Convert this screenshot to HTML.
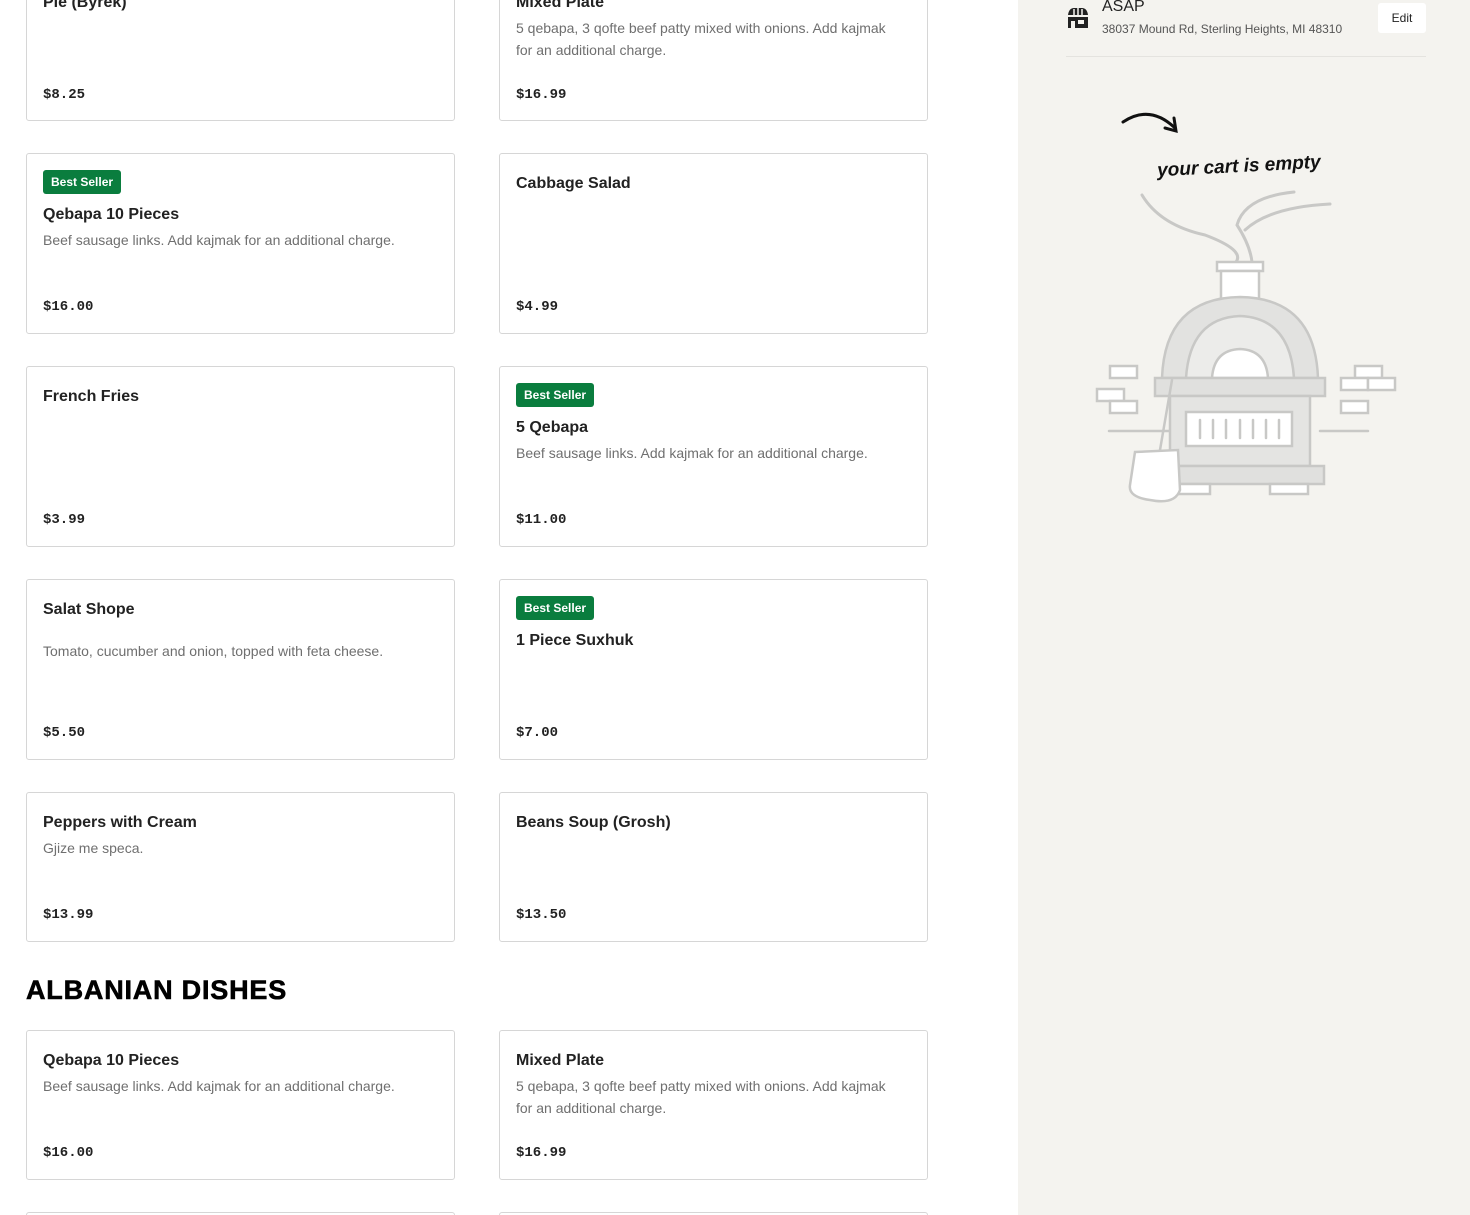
<!DOCTYPE html>
<html><head><meta charset="utf-8"><style>
*{box-sizing:border-box;margin:0;padding:0}
html{width:1470px;height:1215px;overflow:hidden}
body{width:1470px;height:1215px;overflow:hidden;background:#fff;font-family:"Liberation Sans",sans-serif;position:relative}
.card{position:absolute;width:429px;border:1px solid #d6d6d6;border-radius:3px;background:#fff}
.l{left:26px}.r{left:499px}
.t{position:absolute;left:16px;font-size:16px;font-weight:bold;color:#222;white-space:nowrap;margin-top:2px}
.d{position:absolute;left:16px;right:30px;font-size:14px;line-height:22px;color:#6f6f6f}
.p{position:absolute;left:16px;font-family:"Liberation Mono",monospace;font-weight:bold;font-size:14px;color:#222;margin-top:2px}
.b{position:absolute;left:16px;top:16px;background:#0a7d3e;color:#fff;font-size:12px;font-weight:bold;padding:0 8px;height:24px;line-height:24px;border-radius:3px}
.side{position:absolute;left:1018px;top:0;width:452px;height:1215px;background:#f4f3ef}
h2{position:absolute;left:26px;top:975px;font-size:27px;font-weight:900;letter-spacing:0.8px;color:#000;-webkit-text-stroke:0.6px #000}
</style></head><body>

<div class="card l" style="top:-29px;height:150px"><div class="t" style="top:20px">Pie (Byrek)</div><div class="p" style="top:113px">$8.25</div></div>
<div class="card r" style="top:-29px;height:150px"><div class="t" style="top:20px">Mixed Plate</div><div class="d" style="top:45px">5 qebapa, 3 qofte beef patty mixed with onions. Add kajmak for an additional charge.</div><div class="p" style="top:113px">$16.99</div></div>

<div class="card l" style="top:153px;height:181px"><div class="b">Best Seller</div><div class="t" style="top:50px">Qebapa 10 Pieces</div><div class="d" style="top:75px">Beef sausage links. Add kajmak for an additional charge.</div><div class="p" style="top:143px">$16.00</div></div>
<div class="card r" style="top:153px;height:181px"><div class="t" style="top:19px">Cabbage Salad</div><div class="p" style="top:143px">$4.99</div></div>

<div class="card l" style="top:366px;height:181px"><div class="t" style="top:19px">French Fries</div><div class="p" style="top:143px">$3.99</div></div>
<div class="card r" style="top:366px;height:181px"><div class="b">Best Seller</div><div class="t" style="top:50px">5 Qebapa</div><div class="d" style="top:75px">Beef sausage links. Add kajmak for an additional charge.</div><div class="p" style="top:143px">$11.00</div></div>

<div class="card l" style="top:579px;height:181px"><div class="t" style="top:19px">Salat Shope</div><div class="d" style="top:60px">Tomato, cucumber and onion, topped with feta cheese.</div><div class="p" style="top:143px">$5.50</div></div>
<div class="card r" style="top:579px;height:181px"><div class="b">Best Seller</div><div class="t" style="top:50px">1 Piece Suxhuk</div><div class="p" style="top:143px">$7.00</div></div>

<div class="card l" style="top:792px;height:150px"><div class="t" style="top:19px">Peppers with Cream</div><div class="d" style="top:44px">Gjize me speca.</div><div class="p" style="top:112px">$13.99</div></div>
<div class="card r" style="top:792px;height:150px"><div class="t" style="top:19px">Beans Soup (Grosh)</div><div class="p" style="top:112px">$13.50</div></div>

<h2>ALBANIAN DISHES</h2>

<div class="card l" style="top:1030px;height:150px"><div class="t" style="top:19px">Qebapa 10 Pieces</div><div class="d" style="top:44px">Beef sausage links. Add kajmak for an additional charge.</div><div class="p" style="top:112px">$16.00</div></div>
<div class="card r" style="top:1030px;height:150px"><div class="t" style="top:19px">Mixed Plate</div><div class="d" style="top:44px">5 qebapa, 3 qofte beef patty mixed with onions. Add kajmak for an additional charge.</div><div class="p" style="top:112px">$16.99</div></div>
<div class="card l" style="top:1212px;height:20px"></div>
<div class="card r" style="top:1212px;height:20px"></div>

<div class="side">
  <svg style="position:absolute;left:48px;top:6px" width="24" height="24" viewBox="0 0 24 24"><path d="M2 9 Q3 2 8 2 L16 2 Q21 2 22 9 L2 9Z" fill="#222"/><path d="M8 3v6M12 2v7M16 3v6" stroke="#f4f3ef" stroke-width="1.5"/><rect x="2" y="11" width="20" height="11" fill="#222"/><rect x="5" y="15" width="4" height="7" fill="#f4f3ef"/><rect x="12" y="14" width="6" height="4" fill="#f4f3ef"/></svg>
  <div style="position:absolute;left:84px;top:-2px;font-size:16px;color:#222">ASAP</div>
  <div style="position:absolute;left:84px;top:22px;font-size:12px;color:#555">38037 Mound Rd, Sterling Heights, MI 48310</div>
  <div style="position:absolute;left:360px;top:3px;width:48px;height:30px;background:#fff;border-radius:3px;font-size:12px;line-height:30px;text-align:center;color:#222">Edit</div>
  <div style="position:absolute;left:48px;top:56px;width:360px;height:1px;background:#e4e3df"></div>
  <svg style="position:absolute;left:0;top:100px" width="452" height="420" viewBox="1018 100 452 420" fill="none" stroke-linecap="round">
    <path d="M1123 122 Q1150 104 1175 128 M1165 128 L1176 131 L1174 118" stroke="#111" stroke-width="3"/>
    <text x="1157" y="172" font-family="'Liberation Sans',sans-serif" font-size="19" font-weight="bold" font-style="italic" fill="#111" stroke="none" transform="rotate(-3 1240 165)">your cart is empty</text>
    <g stroke="#c8c8c6" stroke-width="3">
      <path d="M1142 195 Q1160 225 1205 235 Q1245 250 1236 262"/>
      <path d="M1294 192 Q1245 197 1237 225 Q1250 245 1252 262"/>
      <path d="M1330 204 Q1270 207 1245 230"/>
    </g>
    <g stroke="#c8c8c6" stroke-width="2.5" fill="#fff">
      <rect x="1217" y="262" width="46" height="9"/>
      <rect x="1221" y="271" width="38" height="28"/>
      <path d="M1162 378 Q1165 298 1240 297 Q1315 298 1318 378Z" fill="#e2e2e0"/>
      <path d="M1186 378 Q1190 318 1240 316 Q1290 318 1294 378Z" fill="#ececea"/>
      <path d="M1212 378 Q1214 350 1240 349 Q1266 350 1268 378Z" fill="#fff"/>
      <rect x="1155" y="378" width="170" height="18" fill="#e0e0de"/>
      <rect x="1170" y="396" width="140" height="70" fill="#e4e4e2"/>
      <rect x="1186" y="412" width="106" height="34" fill="#fff"/>
      <path d="M1200 420v18M1213 420v18M1226 420v18M1240 420v18M1253 420v18M1266 420v18M1279 420v18"/>
      <rect x="1158" y="466" width="166" height="18" fill="#e0e0de"/>
      <rect x="1176" y="484" width="34" height="10"/><rect x="1270" y="484" width="38" height="10"/>
      <rect x="1110" y="366" width="27" height="12"/><rect x="1097" y="389" width="27" height="12"/><rect x="1110" y="401" width="27" height="12"/>
      <rect x="1355" y="366" width="27" height="12"/><rect x="1341" y="378" width="27" height="12"/><rect x="1368" y="378" width="27" height="12"/><rect x="1341" y="401" width="27" height="12"/>
      <path d="M1109 431h60M1320 431h48"/>
      <path d="M1172 380 L1160 450"/>
      <path d="M1135 452 L1178 450 L1180 490 Q1175 505 1150 500 Q1128 497 1130 485Z"/>
    </g>
  </svg>
</div>
</body></html>
